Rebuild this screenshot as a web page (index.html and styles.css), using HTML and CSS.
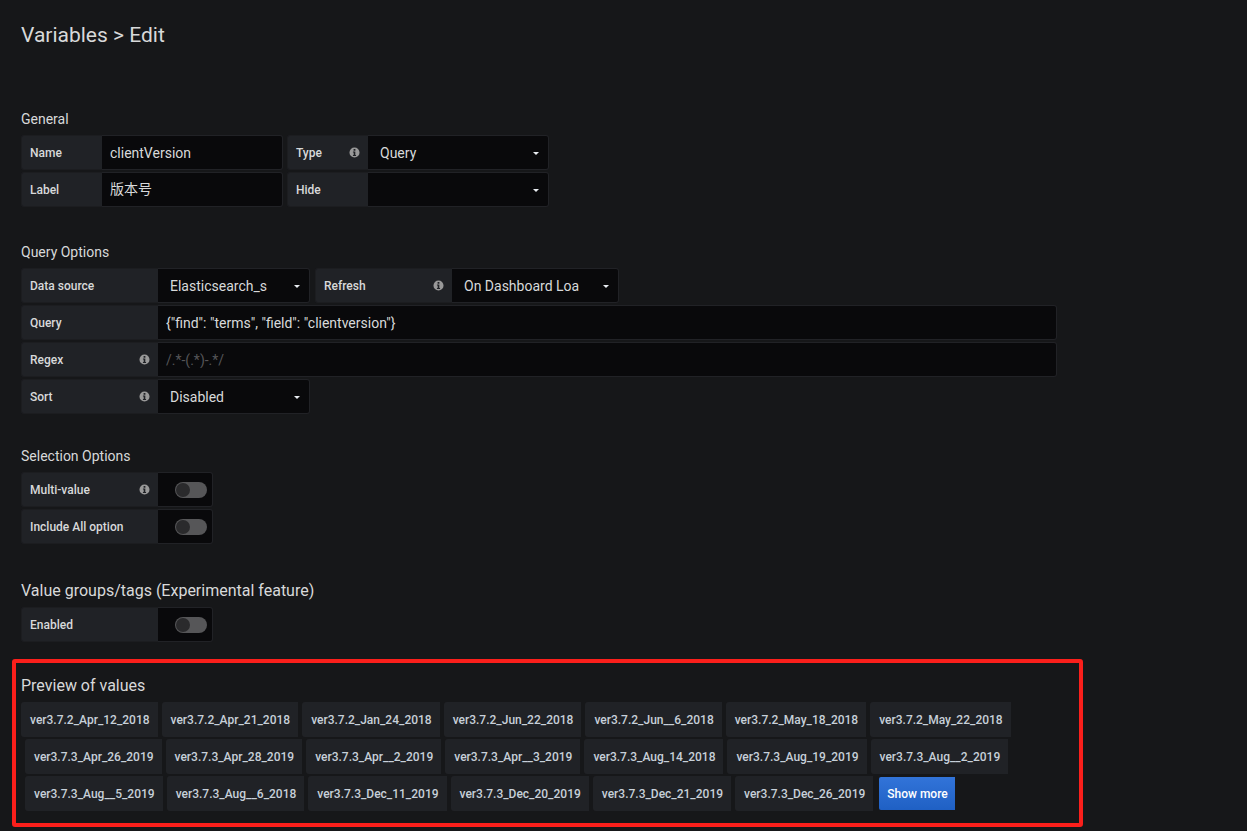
FILE: index.html
```html
<html>

<head>
    <meta charset="utf-8">
    <link rel="stylesheet" href="styles.css">
</head>

<body>
    <svg class="icon-defs" width="0" height="0">
        <symbol id="info" viewBox="0 0 12 12">
            <path fill-rule="evenodd" d="M6 .5a5.5 5.5 0 1 1 0 11 5.500 5.500 0 0 1 0-11zM5 2.300v1.800h2V2.300zM4.300 5v1h.8v2.700h-.8v1h3.400v-1h-.8V5z" />
        </symbol>
    </svg>

    <h2 class="page-title">Variables &gt; Edit</h2>

    <div class="section section-general">
        <h5 class="section-title">General</h5>
        <div class="form-rows">
            <div class="form-row">
                <div class="field">
                    <label class="field-label w-name">Name</label>
                    <input class="field-input w-name-input" value="clientVersion">
                </div>
                <div class="field">
                    <label class="field-label w-type">Type <svg class="info"><use href="#info" /></svg></label>
                    <div class="field-select w-type-select">Query</div>
                </div>
            </div>
            <div class="form-row">
                <div class="field">
                    <label class="field-label w-name">Label</label>
                    <input class="field-input field-input-cjk w-name-input" value="版本号">
                </div>
                <div class="field">
                    <label class="field-label w-type">Hide</label>
                    <div class="field-select w-type-select"></div>
                </div>
            </div>
        </div>
    </div>

    <div class="section section-query">
        <h5 class="section-title">Query Options</h5>
        <div class="form-rows">
            <div class="form-row">
                <div class="field">
                    <label class="field-label w-wide">Data source</label>
                    <div class="field-select w-source">Elasticsearch_s</div>
                </div>
                <div class="field">
                    <label class="field-label w-wide">Refresh <svg class="info"><use href="#info" /></svg></label>
                    <div class="field-select w-refresh">On Dashboard Loa</div>
                </div>
            </div>
            <div class="form-row">
                <div class="field">
                    <label class="field-label w-wide">Query</label>
                    <input class="field-input w-full" value='{"find": "terms", "field": "clientversion"}'>
                </div>
            </div>
            <div class="form-row">
                <div class="field">
                    <label class="field-label w-wide">Regex <svg class="info"><use href="#info" /></svg></label>
                    <input class="field-input w-full" placeholder="/.*-(.*)-.*/">
                </div>
            </div>
            <div class="form-row">
                <div class="field">
                    <label class="field-label w-wide">Sort <svg class="info"><use href="#info" /></svg></label>
                    <div class="field-select w-source">Disabled</div>
                </div>
            </div>
        </div>
    </div>

    <div class="section section-selection">
        <h5 class="section-title">Selection Options</h5>
        <div class="form-rows">
            <div class="form-row">
                <div class="field">
                    <label class="field-label w-wide">Multi-value <svg class="info"><use href="#info" /></svg></label>
                    <div class="switch-box"><span class="switch"><span class="knob"></span></span></div>
                </div>
            </div>
            <div class="form-row">
                <div class="field">
                    <label class="field-label w-wide">Include All option</label>
                    <div class="switch-box"><span class="switch"><span class="knob"></span></span></div>
                </div>
            </div>
        </div>
    </div>

    <div class="section section-groups">
        <h5 class="section-title section-title-big">Value groups/tags (Experimental feature)</h5>
        <div class="form-row">
            <div class="field">
                <label class="field-label w-wide">Enabled</label>
                <div class="switch-box"><span class="switch"><span class="knob"></span></span></div>
            </div>
        </div>
    </div>

    <div class="section section-preview">
        <h5 class="section-title section-title-big">Preview of values</h5>
        <div class="tags">
            <span class="tag">ver3.7.2_Apr_12_2018</span>
            <span class="tag">ver3.7.2_Apr_21_2018</span>
            <span class="tag">ver3.7.2_Jan_24_2018</span>
            <span class="tag">ver3.7.2_Jun_22_2018</span>
            <span class="tag">ver3.7.2_Jun__6_2018</span>
            <span class="tag">ver3.7.2_May_18_2018</span>
            <span class="tag">ver3.7.2_May_22_2018</span>
            <span class="tag">ver3.7.3_Apr_26_2019</span>
            <span class="tag">ver3.7.3_Apr_28_2019</span>
            <span class="tag">ver3.7.3_Apr__2_2019</span>
            <span class="tag">ver3.7.3_Apr__3_2019</span>
            <span class="tag">ver3.7.3_Aug_14_2018</span>
            <span class="tag">ver3.7.3_Aug_19_2019</span>
            <span class="tag">ver3.7.3_Aug__2_2019</span>
            <span class="tag">ver3.7.3_Aug__5_2019</span>
            <span class="tag">ver3.7.3_Aug__6_2018</span>
            <span class="tag">ver3.7.3_Dec_11_2019</span>
            <span class="tag">ver3.7.3_Dec_20_2019</span>
            <span class="tag">ver3.7.3_Dec_21_2019</span>
            <span class="tag">ver3.7.3_Dec_26_2019</span>
            <button class="show-more">Show more</button>
        </div>
    </div>

    <div class="highlight"></div>
</body>

</html>
```

FILE: styles.css
```css
body {
    margin: 0;
    height: 831px;
    overflow: hidden;
    position: relative;
    padding-left: 21px;
    background-color: #161719;
    color: #d8d9da;
    font-family: Roboto, "Noto Sans CJK SC", sans-serif;
    font-size: 14px;
}

.icon-defs {
    position: absolute;
}

.page-title {
    margin: 0;
    padding-top: 23px;
    font-size: 21px;
    font-weight: 400;
    line-height: 24px;
}

.section-general {
    margin-top: 63px;
}

.section-general .form-row {
    gap: 4px;
}

.section-query {
    margin-top: 36px;
}

.section-selection {
    margin-top: 33px;
}

.section-groups {
    margin-top: 38px;
}

.section-preview {
    margin-top: 35px;
}

.section-title {
    margin: 0 0 7px;
    padding-top: 1px;
    font-size: 14px;
    font-weight: 400;
    line-height: 17px;
}

.section-title-big {
    margin-bottom: 8px;
    padding-top: 0;
    font-size: 16px;
}

.form-rows {
    display: flex;
    flex-direction: column;
    gap: 2px;
}

.form-row {
    display: flex;
    gap: 5px;
}

.field {
    display: flex;
    height: 35px;
}

.field-label {
    box-sizing: border-box;
    display: flex;
    align-items: center;
    justify-content: space-between;
    padding: 0 8px;
    background: #202226;
    border: 1px solid #1c1d20;
    border-right: 0;
    border-radius: 3px 0 0 3px;
    font-size: 12px;
    font-weight: 500;
}

.field-input,
.field-select,
.switch-box {
    box-sizing: border-box;
    background: #09090b;
    border: 1px solid #212226;
    border-left: 0;
    border-radius: 0 3px 3px 0;
}

.field-input {
    padding: 0 8px;
    outline: none;
    color: #d8d9da;
    font-family: Roboto, "Noto Sans CJK SC", sans-serif;
    font-size: 14px;
}

.field-input-cjk {
    padding-bottom: 3px;
}

.field-input::placeholder {
    color: #555558;
}

.field-select {
    position: relative;
    display: flex;
    align-items: center;
    padding-left: 12px;
}

.field-select::after {
    content: "";
    position: absolute;
    right: 9px;
    top: 16px;
    border: 3.5px solid transparent;
    border-top-color: #e9edf2;
    border-bottom: 0;
}

.w-name {
    width: 81px;
}

.w-name-input {
    width: 181px;
}

.w-type {
    width: 81px;
}

.w-type-select {
    width: 181px;
}

.w-wide {
    width: 137px;
}

.w-source {
    width: 152px;
}

.w-refresh {
    width: 167px;
}

.w-full {
    width: 899px;
}

.info {
    width: 11px;
    height: 11px;
    fill: #999;
}

.switch-box {
    display: flex;
    align-items: center;
    width: 55px;
    padding-left: 17px;
}

.switch {
    display: flex;
    align-items: center;
    width: 32px;
    height: 16px;
    padding: 0 1px;
    box-sizing: border-box;
    border-radius: 8px;
    background: #565658;
}

.knob {
    width: 14px;
    height: 14px;
    border-radius: 50%;
    background: #2a2a2c;
}

.tags {
    display: flex;
    flex-wrap: wrap;
    row-gap: 2px;
    width: 1036px;
}

.tag {
    display: flex;
    align-items: center;
    height: 35px;
    margin-left: 4px;
    padding: 0 8px 0 9px;
    background: #202226;
    border-radius: 3px 0 0 3px;
    color: #c7d0d9;
    font-size: 12px;
    font-weight: 500;
}

.tag:first-child {
    margin-left: 0;
}

.show-more {
    height: 33px;
    margin: 1px 0 0 6px;
    padding: 0 7px 0 8px;
    border: 0;
    border-radius: 2px 0 0 2px;
    background: linear-gradient(#3274d9, #1f60c4);
    color: #fff;
    font-family: Roboto, sans-serif;
    font-size: 12px;
    font-weight: 500;
}

.highlight {
    position: absolute;
    left: 12px;
    top: 659px;
    width: 1063px;
    height: 160px;
    border: 4px solid #fb1f1b;
    border-radius: 3px;
}
```
